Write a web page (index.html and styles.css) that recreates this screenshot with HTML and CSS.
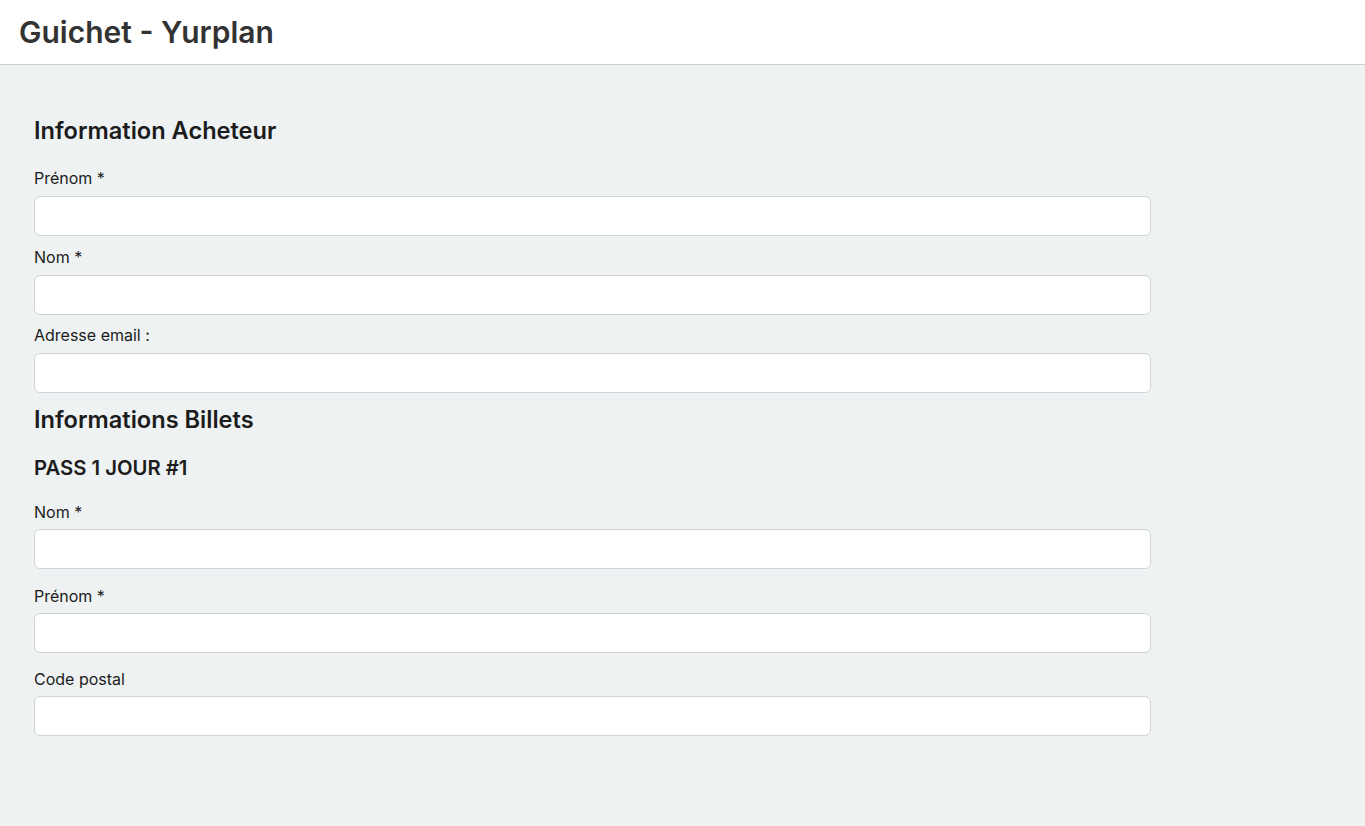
FILE: index.html
```html
<!DOCTYPE html>
<html lang="fr">

<head>
    <meta charset="UTF-8">
    <meta name="viewport" content="width=device-width, initial-scale=1.0">
    <title>Guichet - Yurplan</title>
    <link rel="stylesheet" href="styles.css">
</head>

<body>
    <header class="topbar">
        <h1>Guichet - Yurplan</h1>
    </header>

    <main class="page">
        <form class="form">
            <h2>Information Acheteur</h2>
            <div class="field">
                <label for="buyerFirst">Prénom *</label>
                <input type="text" id="buyerFirst">
            </div>
            <div class="field">
                <label for="buyerLast">Nom *</label>
                <input type="text" id="buyerLast">
            </div>
            <div class="field">
                <label for="buyerEmail">Adresse email :</label>
                <input type="email" id="buyerEmail">
            </div>

            <h2>Informations Billets</h2>
            <h3>PASS 1 JOUR #1</h3>
            <div class="field ticket">
                <label for="ticketLast">Nom *</label>
                <input type="text" id="ticketLast">
            </div>
            <div class="field ticket">
                <label for="ticketFirst">Prénom *</label>
                <input type="text" id="ticketFirst">
            </div>
            <div class="field ticket">
                <label for="ticketZip">Code postal</label>
                <input type="text" id="ticketZip">
            </div>
        </form>
    </main>
</body>

</html>
```

FILE: styles.css
```css
body {
    font-family: Inter, 'Noto Sans', sans-serif;
    margin: 0;
    background: #eef2f3;
    color: #1c1c1c;
}

.topbar {
    background: #fff;
    height: 65px;
    border-bottom: 1px solid #cfcfcf;
    box-sizing: border-box;
    padding: 0 19px;
    display: flex;
    align-items: center;
}

.topbar h1 {
    margin: 0;
    font-size: 30px;
    font-weight: 600;
    color: #333;
}

.page {
    padding: 49px 34px 60px;
}

.form {
    width: 1117px;
}

h2 {
    font-size: 23.6px;
    font-weight: 600;
    margin: 0;
    line-height: 34px;
}

h3 {
    font-size: 20.3px;
    font-weight: 600;
    margin: 17px 0 20px;
    line-height: 28px;
}

.field {
    display: flex;
    flex-direction: column;
}

h2 + .field {
    margin-top: 20px;
}

.field + .field {
    margin-top: 10.5px;
}

.field + h2 {
    margin-top: 10px;
}

label {
    font-size: 16px;
    line-height: 20px;
    margin-bottom: 8px;
}

.ticket label {
    margin-bottom: 7px;
}

.field.ticket + .field.ticket {
    margin-top: 16.5px;
}

input {
    height: 40px;
    box-sizing: border-box;
    border: 1px solid #d0d4d6;
    border-radius: 6px;
    background: #fff;
    padding: 6px 12px;
    font-size: 16px;
    font-family: inherit;
}
```
